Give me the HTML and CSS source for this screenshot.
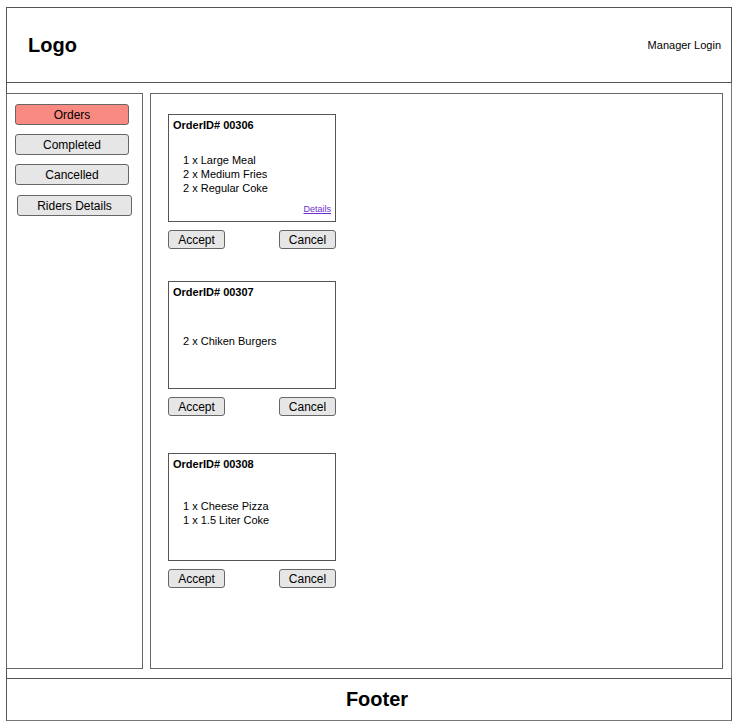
FILE: index.html
```html
<!DOCTYPE html>
<html lang="en">
<head>
  <meta charset="UTF-8">
  <meta name="viewport" content="width=device-width, initial-scale=1.0">
  <title>Orders</title>
  <link rel="stylesheet" href="styles.css">
</head>
<body>
  <div class="page">
    <header class="header">
      <div class="logo">Logo</div>
      <a class="login">Manager Login</a>
    </header>

    <div class="content">
      <nav class="sidebar">
        <button class="side-btn active">Orders</button>
        <button class="side-btn">Completed</button>
        <button class="side-btn">Cancelled</button>
        <button class="side-btn riders">Riders Details</button>
      </nav>

      <main class="main">
        <div class="order">
          <div class="card">
            <div class="order-id">OrderID# 00306</div>
            <div class="items">
              <p>1 x Large Meal</p>
              <p>2 x Medium Fries</p>
              <p>2 x Regular Coke</p>
            </div>
            <a class="details" href="#">Details</a>
          </div>
          <div class="actions">
            <button class="btn">Accept</button>
            <button class="btn">Cancel</button>
          </div>
        </div>

        <div class="order">
          <div class="card">
            <div class="order-id">OrderID# 00307</div>
            <div class="items">
              <p>2 x Chiken Burgers</p>
            </div>
          </div>
          <div class="actions">
            <button class="btn">Accept</button>
            <button class="btn">Cancel</button>
          </div>
        </div>

        <div class="order">
          <div class="card">
            <div class="order-id">OrderID# 00308</div>
            <div class="items">
              <p>1 x Cheese Pizza</p>
              <p>1 x 1.5 Liter Coke</p>
            </div>
          </div>
          <div class="actions">
            <button class="btn">Accept</button>
            <button class="btn">Cancel</button>
          </div>
        </div>
      </main>
    </div>

    <footer class="footer">Footer</footer>
  </div>
</body>
</html>
```

FILE: styles.css
```css
body {
  margin: 0;
  font-family: "Liberation Sans", Arial, sans-serif;
  color: #000;
  background: #fff;
}

.page {
  width: 726px;
  margin: 7px 0 0 6px;
}

.header {
  height: 74px;
  border: 1px solid #555;
  display: flex;
  align-items: center;
  justify-content: space-between;
  padding: 0 10px 0 21px;
}

.logo {
  font-size: 20px;
  font-weight: bold;
}

.login {
  font-size: 11px;
  color: #000;
}

.content {
  height: 576px;
  border-left: 1px solid #555;
  border-right: 1px solid #777;
  padding: 10px 8px 9px 0;
  display: flex;
  gap: 7px;
}

.sidebar {
  width: 137px;
  flex-shrink: 0;
  margin-left: -1px;
  border: 1px solid #666;
  display: flex;
  flex-direction: column;
  align-items: flex-start;
  gap: 9px;
  padding: 10px 0 0 8px;
  box-sizing: border-box;
  height: 576px;
}

.side-btn {
  width: 114px;
  height: 21px;
  font-family: inherit;
  font-size: 12px;
  color: #000;
  background: #e6e6e6;
  border: 1px solid #666;
  border-radius: 3px;
  padding: 0;
}

.side-btn.active {
  background: #f88a82;
}

.side-btn.riders {
  width: 115px;
  margin: 1px 0 0 2px;
}

.main {
  flex: 1;
  border: 1px solid #666;
  padding: 20px 0 0 17px;
  display: flex;
  flex-direction: column;
  align-items: flex-start;
  gap: 32px;
}

.order:last-child {
  margin-top: 5px;
}

.card {
  position: relative;
  width: 166px;
  height: 106px;
  border: 1px solid #555;
  display: flex;
  flex-direction: column;
  font-size: 11px;
}

.order-id {
  font-weight: bold;
  padding: 4px 0 0 4px;
  line-height: 13px;
}

.items {
  flex: 1;
  display: flex;
  flex-direction: column;
  justify-content: center;
  padding: 0 0 6px 14px;
}

.items p {
  margin: 0;
  line-height: 14px;
}

.details {
  position: absolute;
  right: 4px;
  bottom: 7px;
  font-size: 9px;
  color: #6b2fd1;
}

.actions {
  width: 168px;
  display: flex;
  justify-content: space-between;
  margin-top: 8px;
}

.btn {
  width: 57px;
  height: 19px;
  font-family: inherit;
  font-size: 12px;
  color: #000;
  background: #e6e6e6;
  border: 1px solid #666;
  border-radius: 3px;
  padding: 0;
}

.footer {
  height: 41px;
  border: 1px solid #555;
  border-bottom-color: #777;
  display: flex;
  align-items: center;
  justify-content: center;
  padding-left: 16px;
  font-size: 20px;
  font-weight: bold;
}
```
